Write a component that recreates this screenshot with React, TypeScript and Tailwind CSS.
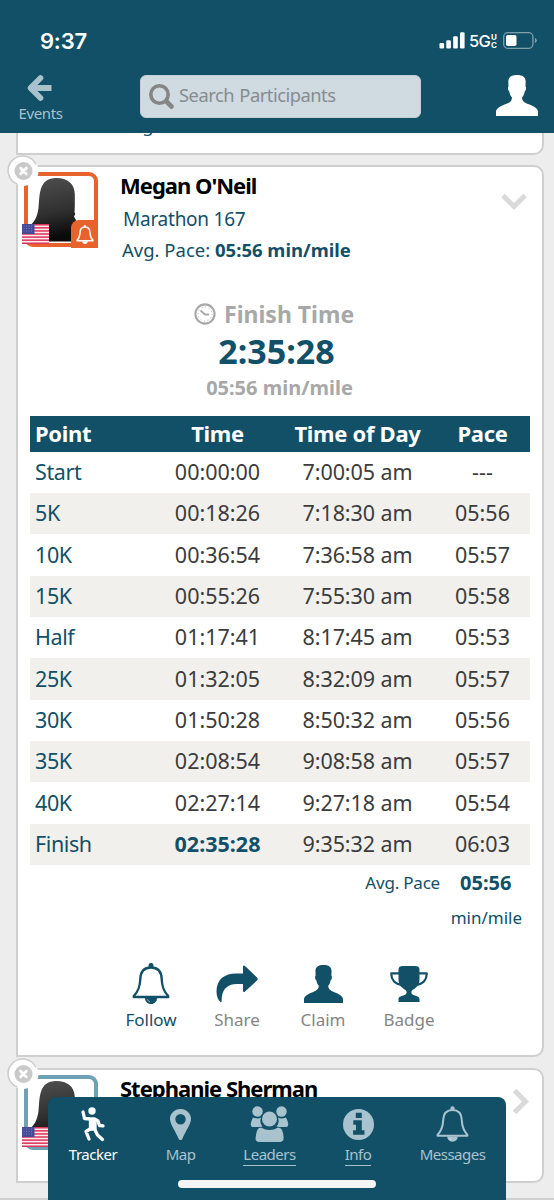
import React from "react";

const splits = [
  ["Start", "00:00:00", "7:00:05 am", "---"],
  ["5K", "00:18:26", "7:18:30 am", "05:56"],
  ["10K", "00:36:54", "7:36:58 am", "05:57"],
  ["15K", "00:55:26", "7:55:30 am", "05:58"],
  ["Half", "01:17:41", "8:17:45 am", "05:53"],
  ["25K", "01:32:05", "8:32:09 am", "05:57"],
  ["30K", "01:50:28", "8:50:32 am", "05:56"],
  ["35K", "02:08:54", "9:08:58 am", "05:57"],
  ["40K", "02:27:14", "9:27:18 am", "05:54"],
  ["Finish", "02:35:28", "9:35:32 am", "06:03"],
];

function Person({ className }: { className: string }) {
  return (
    <svg viewBox="0 0 42 41" className={className} fill="currentColor" preserveAspectRatio="none">
      <path d="M21 0c5.500 0 8.500 2 8.700 6.500l-.2 5c1 .5.6 4-.8 5-.5 3-1.200 4.500-2.700 6 .2 3.500 2 5 6 6.500 6 2.200 10 4.500 10 8V41H0v-4c0-3.500 4-5.800 10-8 4-1.500 5.800-3 6-6.500-1.500-1.500-2.200-3-2.700-6-1.400-1-1.800-4.500-.8-5l-.2-5C12.500 2 15.500 0 21 0z" />
    </svg>
  );
}

function Bell({ className, stroke = 2.4 }: { className: string; stroke?: number }) {
  return (
    <svg viewBox="0 0 38 41" className={className} fill="none" stroke="currentColor" strokeWidth={stroke}>
      <path d="M19 4.500C11 4.500 8.500 10 8.300 16 8 24 6.500 28 1.800 33v1h34.400v-1c-4.700-5-6.200-9-6.500-17C29.500 10 27 4.500 19 4.500z" strokeLinejoin="round" />
      <circle cx="19" cy="2.600" r="2.500" fill="currentColor" stroke="none" />
      <path d="M13 35h12c0 3.500-2.400 6-6 6s-6-2.500-6-6z" fill="currentColor" stroke="none" />
      <path d="M15.500 36.200c.3 1.500 1 2.200 2.500 2.500" strokeWidth=".9" className="stroke-white/60" />
    </svg>
  );
}

function ShareArrow() {
  return (
    <svg viewBox="0 0 42 38" className="h-[38px] w-[42px]" fill="currentColor">
      <path d="M4.500 37C2 35 .5 31 .5 26.500.5 14 9 8.500 20 8.500h7V2c0-1.500 1-2 2-1l12 11.500c1 1 1 2 0 3L29 26.500c-1 1-2 .5-2-1V19h-6C10.500 19 5.500 25 5.700 36c0 1-.5 1.500-1.200 1z" />
    </svg>
  );
}

function Trophy() {
  return (
    <svg viewBox="0 0 38 36" className="h-[36px] w-[38px]" fill="currentColor">
      <path d="M13 0h12c3 0 4.500 1 4.500 3.500V14c0 5-3.500 8-7 10-1.500 1-1.500 3.500 0 4.500 2.500 1.500 7 1.500 7 4.500v3h-21v-3c0-3 4.500-3 7-4.500 1.500-1 1.500-3.500 0-4.500-3.500-2-7-5-7-10V3.500C8.500 1 10 0 13 0z" />
      <path d="M9 7.300H1.300C1 13.500 5 18.500 12 18.800M29 7.300h7.700c.3 6.200-3.700 11.200-10.700 11.500" fill="none" stroke="currentColor" strokeWidth="2.200" strokeLinejoin="round" />
    </svg>
  );
}

function Flag() {
  return (
    <svg viewBox="0 0 27 20" className="h-[20px] w-[27px]">
      <rect width="27" height="20" fill="#f8eef0" />
      {[0, 1, 2, 3, 4, 5, 6].map((i) => (
        <rect key={i} y={i * 3.08} width="27" height="1.540" fill="#e0355c" />
      ))}
      <rect width="12.500" height="10" fill="#454a98" />
      {[2, 4.500, 7].map((y) =>
        [2, 4.500, 7, 9.500].map((x) => <circle key={`${x}-${y}`} cx={x} cy={y} r=".45" fill="#a9abd6" />)
      )}
    </svg>
  );
}

function Close() {
  return (
    <svg viewBox="0 0 32 32" className="absolute -left-[11px] -top-[13px] h-[32px] w-[32px]" fill="none">
      <circle cx="16.500" cy="17" r="15" fill="#fff" />
      <path d="M29 10.500A14.600 14.600 0 1 0 10 30" stroke="#cdcdcd" strokeWidth="1.600" />
      <circle cx="16.500" cy="17" r="9" fill="#c9c9c9" />
      <path d="M13.700 14.200l5.600 5.600M19.300 14.200l-5.600 5.600" stroke="#fff" strokeWidth="3" strokeLinecap="round" />
    </svg>
  );
}

function Avatar({ follow }: { follow: boolean }) {
  return (
    <div
      className={
        follow
          ? "absolute left-[6px] top-[5px] h-[75px] w-[74px] rounded-[9px] border-4 border-[#e8622c] bg-white"
          : "absolute left-[6px] top-[5px] h-[75px] w-[74px] rounded-[9px] border-4 border-[#6ca2b3] bg-white"
      }
    >
      <svg viewBox="0 0 66 67" className="h-[67px] w-[66px]">
        <defs>
          <linearGradient id="hair" x1="0" y1="0" x2="0.15" y2="1">
            <stop offset="0" stopColor="#505050" />
            <stop offset=".6" stopColor="#303030" />
            <stop offset="1" stopColor="#0a0a0a" />
          </linearGradient>
        </defs>
        <path d="M28 2C40 2 46.500 8 46.800 18v12l-.3 6 .8 2-1.300 2.500L48 44c0 1.500-1.500 1.500-1.500 3l-.3 4-1.200 5v9.500H16L1 50C6.500 47 9.500 40 10.500 32 11.200 25 11 18 13 12.500 15.500 5.500 20 2 28 2z" fill="url(#hair)" />
      </svg>
      <div className="absolute -left-[6px] top-[48px]"><Flag /></div>
      {follow && (
        <div className="absolute -right-[4px] top-[44px] flex h-[28px] w-[27px] items-center justify-center rounded-tl-[8px] bg-[#e8622c] text-white">
          <Bell className="h-[19px] w-[18px]" stroke={3.2} />
        </div>
      )}
    </div>
  );
}

function Header() {
  return (
    <header className="absolute inset-x-0 top-0 z-10 h-[133px] bg-[#115067]">
      <div className="flex h-[75px] items-start pt-[27px] font-['Inter',sans-serif] text-white">
        <span className="ml-[40px] w-[60px] text-[22px] leading-[28px] font-semibold tracking-[-0.2px]">9:37</span>
        <svg viewBox="0 0 26 17" className="mt-[5px] ml-[339px] h-[17px] w-[26px]" fill="white">
          <rect x=".5" y="11" width="4.600" height="5.500" rx="1.200" />
          <rect x="7.300" y="8.300" width="4.600" height="8.200" rx="1.200" />
          <rect x="14.200" y="4.300" width="4.600" height="12.200" rx="1.200" />
          <rect x="21" y=".3" width="4.600" height="16.200" rx="1.200" />
        </svg>
        <span className="ml-[4px] w-[22px] text-[16.500px] leading-[28px] font-medium tracking-[-0.8px]">5G</span>
        <span className="mt-[6px] w-[10px] text-[8px] leading-[8px] font-bold">
          <span className="block h-[8px] overflow-hidden">U</span>
          <span className="block h-[8px] overflow-hidden">C</span>
        </span>
        <svg viewBox="0 0 34 17" className="mt-[5px] ml-[2px] h-[17px] w-[34px]">
          <rect x=".7" y=".7" width="29.200" height="15.600" rx="4" fill="none" stroke="#7f9fab" strokeWidth="1.300" />
          <rect x="3" y="3" width="10.500" height="11" rx="1.800" fill="#fff" />
          <path d="M31.800 5.800q2 1 2 2.700t-2 2.700z" fill="#7f9fab" />
        </svg>
      </div>
      <div className="flex items-start">
        <div className="flex w-[81px] flex-col items-center text-[#a9c3ce]">
          <svg viewBox="0 0 25 26" className="-ml-[2px] h-[26px] w-[25px]" fill="none" stroke="currentColor" strokeWidth="5.600" strokeLinecap="round" strokeLinejoin="round">
            <path d="M13.500 3L3.500 13l10 10" />
            <path d="M5 13h16.500" strokeLinecap="square" strokeWidth="6" />
          </svg>
          <span className="mt-[1px] text-[15px] leading-[22px] tracking-[-0.4px]">Events</span>
        </div>
        <div className="ml-[59px] flex h-[43px] w-[281px] items-center rounded-[6px] border border-[#c3ced5] bg-[#d0dae1] text-[#858c90]">
          <svg viewBox="0 0 25 25" className="ml-[8px] h-[25px] w-[25px]" fill="none" stroke="#858585">
            <circle cx="10.500" cy="10.500" r="8.700" strokeWidth="3.600" />
            <path d="M17.500 17.500l5 5" strokeWidth="4.600" strokeLinecap="round" />
          </svg>
          <span className="ml-[5px] pb-[2px] text-[18px] tracking-[-0.5px] [word-spacing:1px] scale-x-[1.02] origin-left tracking-[-0.3px]">Search Participants</span>
        </div>
        <Person className="ml-[75px] h-[41px] w-[42px] text-white" />
      </div>
    </header>
  );
}

function Action({ icon, label, active }: { icon: React.ReactNode; label: string; active?: boolean }) {
  return (
    <div className="flex w-[86px] flex-col items-center text-[#115067]">
      <div className="flex h-[42px] items-center">{icon}</div>
      <span className={active ? "mt-[3px] text-[17px] leading-[24px]" : "mt-[3px] text-[17px] leading-[24px] text-[#858585]"}>{label}</span>
    </div>
  );
}

function Tab({ width, icon, label, active, link }: { width: string; icon: React.ReactNode; label: string; active?: boolean; link?: boolean }) {
  return (
    <div className={`${width} flex flex-col items-center ${active ? "text-white" : "text-[#a9c3ce]"}`}>
      <div className="flex h-[38px] items-center">{icon}</div>
      <span className={`h-[23px] text-[15px] leading-[22px] tracking-[-0.5px] ${link ? "border-b-[1.5px] border-[#a9c3ce]" : ""}`}>{label}</span>
    </div>
  );
}

function TabBar() {
  return (
    <nav className="absolute left-[48px] top-[1097px] z-10 h-[103px] w-[458px] rounded-t-[8px] bg-[#115067]">
      <div className="flex pt-[8px]">
        <Tab width="w-[90px]" active label="Tracker" icon={
          <svg viewBox="0 0 24 35" className="h-[35px] w-[24px]" fill="none" stroke="currentColor" strokeWidth="3.300" strokeLinecap="round" strokeLinejoin="round">
            <circle cx="11" cy="4" r="3.700" fill="currentColor" stroke="none" />
            <path d="M2 5l1.500 6.500 6 .5h4l3.500 2 1.500 4.500 3.500.3" />
            <path d="M9.500 13h4.500v9H9.500z" fill="currentColor" />
            <path d="M9 22l-4 2.500 3 7.500M13.500 22l3 6 5 4.500" />
          </svg>
        } />
        <Tab width="w-[85px]" label="Map" icon={
          <svg viewBox="0 0 21 31" className="h-[31px] w-[21px]" fill="currentColor">
            <path fillRule="evenodd" d="M10.500 0C16.500 0 21 4.500 21 10c0 5-6 13-8.500 19.500-.8 2-3.200 2-4 0C6 23 0 15 0 10 0 4.500 4.500 0 10.500 0zm0 5a5.200 5.200 0 100 10.400 5.200 5.200 0 000-10.400z" />
          </svg>
        } />
        <Tab width="w-[93px]" link label="Leaders" icon={
          <svg viewBox="0 0 39 36" className="h-[36px] w-[39px]" fill="currentColor">
            <circle cx="7.500" cy="5.500" r="5.200" /><circle cx="31.500" cy="5.500" r="5.200" />
            <path d="M3 11.500q5 2 8 0-1.800 6 1.500 9l-3 .5H2q-3-2 1-9.500zM36 11.500q-5 2-8 0 1.800 6-1.500 9l3 .5H37q3-2-1-9.500z" />
            <circle cx="19.500" cy="13" r="7.500" />
            <path d="M11 21.500q8.500 5 17 0 4.500 0 5.300 7 .7 5-.3 6-1 1.500-4 1.500H10q-3 0-4-1.500-1-1 .3-7 1-6 4.700-6z" />
          </svg>
        } />
        <Tab width="w-[84px]" link label="Info" icon={
          <svg viewBox="0 0 31 31" className="h-[31px] w-[31px]">
            <circle cx="15.500" cy="15.500" r="15.500" fill="currentColor" />
            <path d="M12.800 3.700h6v5.200h-6zM10.300 11.200h8.500v10h2.700v4.600H10.100v-4.600h2.900V15.800h-2.700z" fill="#115067" />
          </svg>
        } />
        <Tab width="w-[105px]" label="Messages" icon={<Bell className="h-[36px] w-[33px]" stroke={2.3} />} />
      </div>
      <div className="absolute left-[130px] top-[83px] h-[8px] w-[198px] rounded-full bg-[#f5f5f5]" />
    </nav>
  );
}

const cols = "grid grid-cols-[125px_125px_155px_95px]";

export default function App() {
  return (
    <div className="relative h-[1200px] w-[554px] overflow-hidden bg-[#ededed] font-['Noto_Sans',sans-serif] text-[#115067]">
      <Header />
      <main className="flex flex-col gap-[11px] pt-[100px]">
        <section className="ml-[16px] h-[55px] w-[528px] shrink-0 rounded-r-[10px] border-2 border-[#cfcfcf] bg-white pt-[9px]">
          <div className="ml-[103px] text-[18.500px] leading-[27px]">Avg. Pace:</div>
        </section>

        <section className="relative -mt-px ml-[16px] h-[892px] w-[528px] shrink-0 rounded-r-[10px] border-2 border-[#cfcfcf] bg-white">
          <Avatar follow />
          <Close />
          <svg viewBox="0 0 26 18" className="absolute left-[483px] top-[26px] h-[18px] w-[26px]" fill="none" stroke="#dadada" strokeWidth="5">
            <path d="M2 2.500l11 11 11-11" />
          </svg>
          <div className="ml-[102px] pt-[3px]">
            <h2 className="text-[22px] leading-[30px] font-bold tracking-[-1px] text-black">Megan O'Neil</h2>
            <p className="ml-[3px] mt-[4px] text-[19px] leading-[30px] tracking-[-0.25px]">Marathon 167</p>
            <p className="ml-[2px] text-[18.500px] leading-[31px]">Avg. Pace: <b>05:56 min/mile</b></p>
          </div>
          <div className="mt-[33px] flex h-[32px] items-center pl-[176px] text-[#a8a8a8]">
            <svg viewBox="0 0 22 22" className="h-[22px] w-[22px]" fill="none" stroke="currentColor">
              <circle cx="11" cy="11" r="9.600" strokeWidth="2.100" />
              <circle cx="11" cy="11" r="7" strokeWidth="1" strokeDasharray=".9 2.765" />
              <path d="M6.500 7.500L11 11.500h4" strokeWidth="1.800" />
            </svg>
            <span className="ml-[8px] text-[23px] leading-[32px] font-bold">Finish Time</span>
          </div>
          <div className="ml-[-7px] text-center text-[34px] leading-[42px] font-bold">2:35:28</div>
          <div className="-ml-px text-center text-[20px] leading-[32px] font-bold text-[#a8a8a8]">05:56 min/mile</div>

          <div className="ml-[12px] mt-[12px] w-[500px]">
            <div className={`${cols} h-[35.5px] bg-[#115067] text-center text-[22px] leading-[34px] font-bold tracking-[-0.3px] text-white`}>
              <span className="pl-[5px] text-left">Point</span><span>Time</span><span>Time of Day</span><span>Pace</span>
            </div>
            {splits.map((r, i) => (
              <div key={r[0]} className={`${cols} h-[41.35px] items-center text-center text-[21.500px] text-[#3c3c3c] ${i % 2 ? "bg-[#f1f0ed]" : "bg-white"}`}>
                <span className="pl-[5px] text-left tracking-[-0.4px] text-[#115067]">{r[0]}</span>
                <span className={r[0] === "Finish" ? "font-bold text-[#115067]" : ""}>{r[1]}</span>
                <span className="tracking-[-0.1px]">{r[2]}</span>
                <span>{r[3]}</span>
              </div>
            ))}
            <div className="flex h-[36px] items-center justify-end">
              <span className="text-[17px] tracking-[-0.2px]">Avg. Pace</span>
              <b className="ml-[20px] w-[70px] text-[20px]">05:56</b>
            </div>
            <div className="pr-[8px] text-right text-[17px] leading-[34px]">min/mile</div>
          </div>

          <div className="ml-[90px] mt-[28px] flex">
            <Action active icon={<Bell className="h-[41px] w-[38px]" />} label="Follow" />
            <Action icon={<ShareArrow />} label="Share" />
            <Action icon={<Person className="h-[38px] w-[39px]" />} label="Claim" />
            <Action icon={<Trophy />} label="Badge" />
          </div>
        </section>

        <section className="relative ml-[16px] h-[115px] w-[528px] shrink-0 rounded-r-[10px] border-2 border-[#cfcfcf] bg-white">
          <Avatar follow={false} />
          <Close />
          <svg viewBox="0 0 18 27" className="absolute left-[494px] top-[18px] h-[27px] w-[18px]" fill="none" stroke="#dadada" strokeWidth="5">
            <path d="M2.500 2.500l11 11-11 11" />
          </svg>
          <h2 className="ml-[102px] pt-[3px] text-[22px] leading-[30px] font-bold tracking-[-1px] text-black">Stephanie Sherman</h2>
        </section>
        <div className="mt-[4px] h-[20px] w-[554px] shrink-0 border-t-2 border-r-2 border-[#cfcfcf]" />
      </main>
      <TabBar />
    </div>
  );
}
